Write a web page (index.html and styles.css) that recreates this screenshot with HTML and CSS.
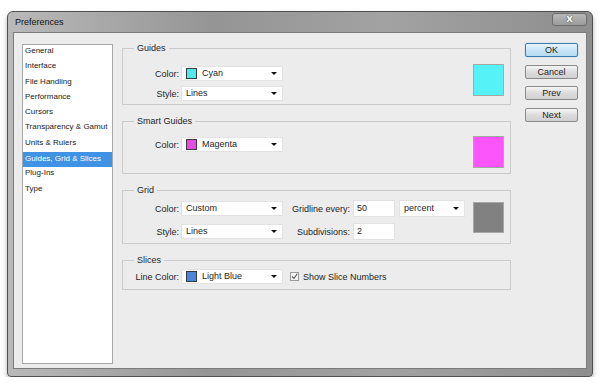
FILE: index.html
```html
<!DOCTYPE html>
<html lang="en">
<head>
    <meta charset="UTF-8">
    <title>Preferences</title>
    <link rel="stylesheet" href="styles.css">
</head>
<body>

    <div class="window">
        <!-- Title bar -->
        <div class="titlebar">
            <span class="title">Preferences</span>
            <span class="close-btn">x</span>
        </div>

        <div class="client">
            <!-- Category list -->
            <ul class="category-list">
                <li>General</li>
                <li>Interface</li>
                <li>File Handling</li>
                <li>Performance</li>
                <li>Cursors</li>
                <li>Transparency &amp; Gamut</li>
                <li>Units &amp; Rulers</li>
                <li class="selected">Guides, Grid &amp; Slices</li>
                <li>Plug-Ins</li>
                <li>Type</li>
            </ul>

            <!-- Settings panel -->
            <div class="panel">
                <fieldset class="group guides">
                    <legend>Guides</legend>
                    <div class="rows">
                        <div class="row">
                            <span class="label">Color:</span>
                            <div class="dropdown"><span class="chip" style="background:#4fe9ee"></span>Cyan</div>
                        </div>
                        <div class="row">
                            <span class="label">Style:</span>
                            <div class="dropdown">Lines</div>
                        </div>
                    </div>
                    <div class="swatch" style="background:#55f2f8"></div>
                </fieldset>

                <fieldset class="group smart">
                    <legend>Smart Guides</legend>
                    <div class="rows">
                        <div class="row">
                            <span class="label">Color:</span>
                            <div class="dropdown"><span class="chip" style="background:#e64de6"></span>Magenta</div>
                        </div>
                    </div>
                    <div class="swatch" style="background:#fb55fb"></div>
                </fieldset>

                <fieldset class="group grid">
                    <legend>Grid</legend>
                    <div class="rows">
                        <div class="row tall">
                            <span class="label">Color:</span>
                            <div class="dropdown">Custom</div>
                            <span class="label wide">Gridline every:</span>
                            <div class="textbox">50</div>
                            <div class="dropdown small">percent</div>
                        </div>
                        <div class="row tall">
                            <span class="label">Style:</span>
                            <div class="dropdown">Lines</div>
                            <span class="label wide">Subdivisions:</span>
                            <div class="textbox">2</div>
                        </div>
                    </div>
                    <div class="swatch" style="background:#818181"></div>
                </fieldset>

                <fieldset class="group slices">
                    <legend>Slices</legend>
                    <div class="rows">
                        <div class="row">
                            <span class="label">Line Color:</span>
                            <div class="dropdown"><span class="chip" style="background:#4a86e0"></span>Light Blue</div>
                            <span class="checkbox">
                                <svg width="7" height="7" viewBox="0 0 7 7"><path d="M1 3.5 L3 5.5 L6.2 0.8" fill="none" stroke="#555" stroke-width="1.1"/></svg>
                            </span>
                            <span class="check-label">Show Slice Numbers</span>
                        </div>
                    </div>
                </fieldset>
            </div>

            <!-- Dialog buttons -->
            <div class="buttons">
                <button class="default">OK</button>
                <button>Cancel</button>
                <button>Prev</button>
                <button>Next</button>
            </div>
        </div>
    </div>

</body>
</html>
```

FILE: styles.css
```css
body {
    margin: 0;
    background-color: #fff;
    font-family: "Liberation Sans", Arial, sans-serif;
    color: #1e1e1e;
}

.window {
    margin: 11px 0 0 7px;
    width: 586px;
    height: 366px;
    box-sizing: border-box;
    border: 1px solid #4f4f4f;
    border-radius: 6px 6px 4px 4px;
    padding: 0 5px 7px 5px;
    display: flex;
    flex-direction: column;
    background: linear-gradient(to right, #b9b9b9, #959595 35%, #a2a2a2 65%, #8e8e8e);
    box-shadow: 0 3px 5px rgba(0, 0, 0, 0.3);
}

.titlebar {
    height: 20px;
    display: flex;
    justify-content: space-between;
    align-items: flex-start;
}

.title {
    font-size: 9px;
    line-height: 20px;
    padding-left: 2px;
    color: #111;
}

.close-btn {
    margin-top: 1px;
    width: 35px;
    height: 13px;
    box-sizing: border-box;
    border: 1px solid #6c6c6c;
    border-radius: 3px;
    background: linear-gradient(#b8b8b8, #9c9c9c);
    color: #fff;
    font: bold 11px/10px "DejaVu Sans", sans-serif;
    text-align: center;
    text-shadow: 0 0 1px #333, 0 0 1px #333;
}

.client {
    flex: 1;
    display: flex;
    align-items: flex-start;
    background-color: #ececec;
    border: 1px solid #7b7b7b;
    padding: 10px 8px 0 8px;
}

.category-list {
    list-style: none;
    margin: 1px 0 0 0;
    padding: 0;
    width: 91px;
    height: 320px;
    box-sizing: border-box;
    background-color: #fff;
    border: 1px solid #a9a9a9;
    font-size: 8px;
}

.category-list li {
    height: 15.3px;
    line-height: 12px;
    padding-left: 2px;
    white-space: nowrap;
    color: #222;
}

.category-list li.selected {
    background-color: #3f92e4;
    color: #fff;
    line-height: 13px;
}

.panel {
    width: 389px;
    margin-left: 9px;
    margin-top: -1px;
    display: flex;
    flex-direction: column;
    gap: 10px;
}

.group {
    margin: 0;
    padding: 0 6px 4px 3px;
    border: 1px solid #cbcbcb;
    display: flex;
    align-items: flex-start;
    font-size: 9px;
}

.group legend {
    margin-left: 8px;
    padding: 0 3px;
    line-height: 12px;
}

.rows {
    display: flex;
    flex-direction: column;
    gap: 5px;
}

.row {
    display: flex;
    align-items: center;
    height: 15px;
}

.row.tall {
    height: 17px;
}

.label {
    width: 53px;
    text-align: right;
    margin-right: 2px;
    white-space: nowrap;
}

.label.wide {
    width: 67px;
    margin-right: 3px;
}

.dropdown {
    position: relative;
    width: 102px;
    height: 15px;
    box-sizing: border-box;
    background-color: #fff;
    border: 1px solid #e2e2e2;
    padding-left: 4px;
    display: flex;
    align-items: center;
    line-height: 13px;
}

.dropdown::after {
    content: "";
    position: absolute;
    right: 5px;
    top: 5px;
    border-left: 3px solid transparent;
    border-right: 3px solid transparent;
    border-top: 3px solid #111;
}

.dropdown.small {
    width: 66px;
    height: 17px;
    margin-left: 4px;
}

.dropdown.small::after {
    top: 6px;
}

.chip {
    width: 11px;
    height: 11px;
    box-sizing: border-box;
    border: 1px solid #3a3a3a;
    margin-right: 5px;
}

.textbox {
    width: 42px;
    height: 17px;
    box-sizing: border-box;
    background-color: #fff;
    border: 1px solid #e2e2e2;
    padding-left: 3px;
    line-height: 15px;
}

.swatch {
    width: 31px;
    height: 32px;
    margin-left: auto;
    box-sizing: border-box;
    border: 1px solid #a8a8a8;
}

.guides { padding-bottom: 3px; }
.guides .rows { padding-top: 12px; }
.guides .swatch { margin-top: 10px; }

.smart { padding-bottom: 5px; }
.smart .rows { padding-top: 10px; }
.smart .swatch { margin-top: 9px; }

.grid { padding-bottom: 3px; }
.grid .rows { padding-top: 4px; gap: 6px; }
.grid .swatch { margin-top: 6px; height: 31px; }

.slices { padding-bottom: 5px; }
.slices .rows { padding-top: 3px; }

.checkbox {
    width: 9px;
    height: 9px;
    box-sizing: border-box;
    border: 1px solid #9a9a9a;
    background-color: #f4f4f4;
    margin-left: 7px;
    display: flex;
    align-items: center;
    justify-content: center;
}

.check-label {
    margin-left: 4px;
}

.buttons {
    margin-left: 14px;
    display: flex;
    flex-direction: column;
    gap: 7.7px;
}

button {
    width: 53px;
    height: 14px;
    padding: 0;
    font-family: "Liberation Sans", Arial, sans-serif;
    font-size: 9px;
    line-height: 12px;
    color: #1e1e1e;
    border: 1px solid #8a8a8a;
    border-radius: 2px;
    background: linear-gradient(#f6f6f6, #dcdcdc 50%, #d0d0d0);
}

button.default {
    border-color: #3d7bad;
    background: linear-gradient(#e8f4fb, #c8e5f6 50%, #b4dbf2);
    box-shadow: 0 0 1px #6fb7e6;
}
```
